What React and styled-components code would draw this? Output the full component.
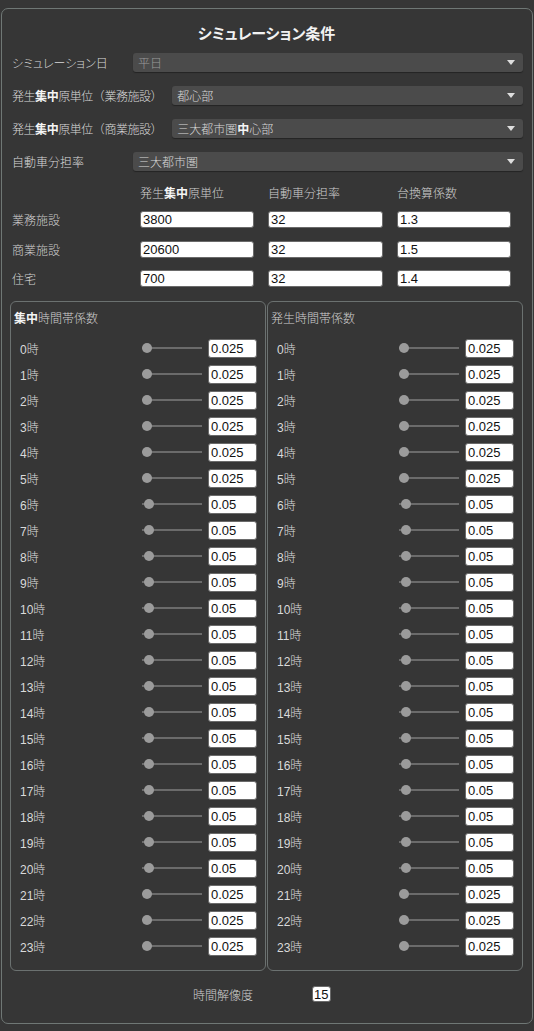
import React from "react";
import styled, { createGlobalStyle } from "styled-components";

const GlobalStyle = createGlobalStyle`
  html, body {
    margin: 0;
    padding: 0;
    background: #363636;
  }
  body {
    font-family: "Liberation Sans", "Noto Sans CJK JP", sans-serif;
    color: #d8d8d8;
    font-size: 12px;
  }
  * { box-sizing: border-box; }
`;

const concentration = [
  0.025, 0.025, 0.025, 0.025, 0.025, 0.025,
  0.05, 0.05, 0.05, 0.05, 0.05, 0.05, 0.05, 0.05, 0.05, 0.05, 0.05, 0.05, 0.05, 0.05, 0.05,
  0.025, 0.025, 0.025,
];
const generation = [...concentration];

const facilities = [
  { name: "業務施設", unit: "3800", share: "32", factor: "1.3" },
  { name: "商業施設", unit: "20600", share: "32", factor: "1.5" },
  { name: "住宅", unit: "700", share: "32", factor: "1.4" },
];

export default function App() {
  return (
    <>
      <GlobalStyle />
      <Frame>
        <Title>シミュレーション条件</Title>

        <FormRow>
          <FieldLabel className="kana">シミュレーション日</FieldLabel>
          <Select $muted>
            <span>平日</span>
            <Arrow />
          </Select>
        </FormRow>
        <FormRow>
          <FieldLabel className="tight">
            発生<b>集中</b>原単位（業務施設）
          </FieldLabel>
          <Select>
            <span>都心部</span>
            <Arrow />
          </Select>
        </FormRow>
        <FormRow>
          <FieldLabel className="tight">
            発生<b>集中</b>原単位（商業施設）
          </FieldLabel>
          <Select>
            <span>
              三大都市圏<b>中</b>心部
            </span>
            <Arrow />
          </Select>
        </FormRow>
        <FormRow>
          <FieldLabel>自動車分担率</FieldLabel>
          <Select>
            <span>三大都市圏</span>
            <Arrow />
          </Select>
        </FormRow>

        <TableHead>
          <span />
          <ColTitle>
            発生<b>集中</b>原単位
          </ColTitle>
          <ColTitle>自動車分担率</ColTitle>
          <ColTitle>台換算係数</ColTitle>
        </TableHead>
        <InputGrid>
          {facilities.map((f) => (
            <React.Fragment key={f.name}>
              <RowLabel>{f.name}</RowLabel>
              <TextBox defaultValue={f.unit} />
              <TextBox defaultValue={f.share} />
              <TextBox defaultValue={f.factor} />
            </React.Fragment>
          ))}
        </InputGrid>

        <Columns>
          <HourPanel
            title={
              <>
                <b>集中</b>時間帯係数
              </>
            }
            values={concentration}
          />
          <HourPanel title="発生時間帯係数" values={generation} />
        </Columns>

        <Resolution>
          <span>時間解像度</span>
          <SmallBox defaultValue="15" />
        </Resolution>
      </Frame>
    </>
  );
}

function HourPanel({ title, values }) {
  return (
    <Group>
      <GroupTitle>{title}</GroupTitle>
      {values.map((v, i) => (
        <HourRow key={i}>
          <HourLabel>{i}時</HourLabel>
          <Slider>
            <Thumb style={{ left: `${v * 60 - 1.5}px` }} />
          </Slider>
          <HourBox defaultValue={v} />
        </HourRow>
      ))}
    </Group>
  );
}

const Frame = styled.div`
  margin: 8px 0 0 1px;
  width: 532px;
  height: 1016px;
  border: 1px solid #6f7775;
  border-radius: 7px;
  padding: 0 9px 0 8px;
  font-weight: 300;
`;

const Title = styled.h1`
  margin: 15px 0 9px;
  height: 20px;
  line-height: 20px;
  font-size: 15px;
  font-weight: bold;
  color: #f2f2f2;
  text-align: center;
  font-feature-settings: "palt";
`;

const FormRow = styled.div`
  display: flex;
  align-items: center;
  gap: 10px;
  height: 19px;
  margin: 0 0 14px 2px;
`;

const FieldLabel = styled.div`
  flex: 0 0 auto;
  min-width: 111px;
  white-space: nowrap;
  &.kana {
    font-feature-settings: "palt";
  }
  &.tight {
    letter-spacing: -0.45px;
  }
  b {
    color: #f4f4f4;
    font-weight: bold;
  }
`;

const Select = styled.div`
  flex: 1;
  height: 19px;
  display: flex;
  align-items: center;
  padding: 0 8px 0 5px;
  background: #4b4b4b;
  border-radius: 3px;
  box-shadow: 0 1px 1px rgba(0, 0, 0, 0.35);
  color: ${(p) => (p.$muted ? "#9c9c9c" : "#d8d8d8")};
  span {
    flex: 1;
  }
  b {
    color: #f4f4f4;
    font-weight: bold;
  }
`;

const Arrow = styled.i`
  width: 0;
  height: 0;
  border-left: 4px solid transparent;
  border-right: 4px solid transparent;
  border-top: 5px solid #dedede;
`;

const TableHead = styled.div`
  display: grid;
  grid-template-columns: 114px 114px 115px 114px;
  column-gap: 14px;
  margin: -2px 0 10px 2px;
  height: 18px;
  align-items: center;
`;

const ColTitle = styled.div`
  color: #cfcfcf;
  b {
    color: #f4f4f4;
    font-weight: bold;
  }
`;

const InputGrid = styled.div`
  display: grid;
  grid-template-columns: 114px 114px 115px 114px;
  grid-auto-rows: 17px;
  column-gap: 14px;
  row-gap: 12.5px;
  margin-left: 2px;
  align-items: center;
`;

const RowLabel = styled.div`
  color: #cfcfcf;
`;

const TextBox = styled.input`
  width: 100%;
  height: 17px;
  border: 1px solid #6a6a6a;
  border-radius: 3px;
  background: #fff;
  color: #111;
  font-family: "Liberation Sans", sans-serif;
  font-size: 13px;
  padding: 0 2px;
  outline: none;
`;

const Columns = styled.div`
  display: flex;
  gap: 1px;
  margin-top: 14px;
`;

const Group = styled.div`
  width: 256px;
  height: 670px;
  border: 1px solid #6b7170;
  border-radius: 6px;
  padding: 9px 8px 0 9px;
`;

const GroupTitle = styled.div`
  height: 16px;
  line-height: 16px;
  margin: 0 0 8px -6px;
  color: #cfcfcf;
  b {
    color: #f4f4f4;
    font-weight: bold;
  }
`;

const HourRow = styled.div`
  display: flex;
  align-items: center;
  height: 26px;
`;

const HourLabel = styled.div`
  width: 122px;
  color: #dadada;
`;

const Slider = styled.div`
  position: relative;
  width: 60px;
  height: 2px;
  margin-right: 6px;
  background: #6b6b6b;
`;

const Thumb = styled.span`
  position: absolute;
  top: -4px;
  width: 10px;
  height: 10px;
  border-radius: 50%;
  background: #9b9b9b;
`;

const HourBox = styled(TextBox)`
  width: 49px;
  height: 19px;
`;

const Resolution = styled.div`
  display: flex;
  align-items: center;
  height: 16px;
  margin-top: 15px;
  padding-left: 183px;
  span {
    width: 119px;
    color: #cfcfcf;
  }
`;

const SmallBox = styled(TextBox)`
  width: 19px;
  height: 16px;
  padding: 0 1px;
`;
